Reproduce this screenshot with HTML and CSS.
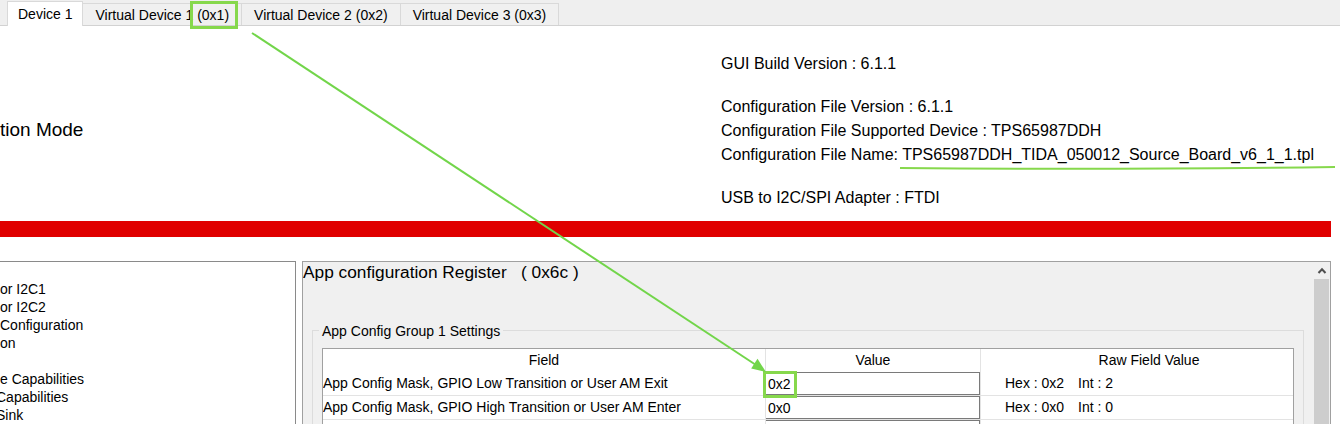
FILE: index.html
```html
<!DOCTYPE html>
<html>
<head>
<meta charset="utf-8">
<link rel="stylesheet" href="styles.css">
</head>
<body>
<div class="tabs">
  <div class="tab active">Device 1</div>
  <div class="tab">Virtual Device 1 (0x1)</div>
  <div class="tab">Virtual Device 2 (0x2)</div>
  <div class="tab">Virtual Device 3 (0x3)</div>
</div>
<div class="header">
  <div class="mode">tion Mode</div>
  <div class="info">
    <div class="line">GUI Build Version : 6.1.1</div>
    <div class="block">
      <div class="line">Configuration File Version : 6.1.1</div>
      <div class="line">Configuration File Supported Device : TPS65987DDH</div>
      <div class="line">Configuration File Name: TPS65987DDH_TIDA_050012_Source_Board_v6_1_1.tpl</div>
    </div>
    <div class="line">USB to I2C/SPI Adapter : FTDI</div>
  </div>
</div>
<div class="redbar"></div>
<div class="main">
  <div class="tree">
    <div class="item"></div>
    <div class="item">or I2C1</div>
    <div class="item">or I2C2</div>
    <div class="item">Configuration</div>
    <div class="item">on</div>
    <div class="item"></div>
    <div class="item">e Capabilities</div>
    <div class="item clip">Capabilities</div>
    <div class="item clip">Sink</div>
  </div>
  <div class="panel">
    <div class="panel-body">
      <div class="title">App configuration Register &nbsp;&nbsp;( 0x6c )</div>
      <div class="group">
        <div class="legend">App Config Group 1 Settings</div>
        <div class="table">
          <div class="row head">
            <div class="cell field center">Field</div>
            <div class="cell value center">Value</div>
            <div class="cell raw center">Raw Field Value</div>
          </div>
          <div class="row">
            <div class="cell field">App Config Mask, GPIO Low Transition or User AM Exit</div>
            <div class="cell value"><div class="input">0x2</div></div>
            <div class="cell raw"><span class="hex">Hex : 0x2</span><span>Int : 2</span></div>
          </div>
          <div class="row">
            <div class="cell field">App Config Mask, GPIO High Transition or User AM Enter</div>
            <div class="cell value"><div class="input">0x0</div></div>
            <div class="cell raw"><span class="hex">Hex : 0x0</span><span>Int : 0</span></div>
          </div>
          <div class="row">
            <div class="cell field">App Config Mask</div>
            <div class="cell value"><div class="input">0x0</div></div>
            <div class="cell raw"><span class="hex">Hex : 0x0</span><span>Int : 0</span></div>
          </div>
        </div>
      </div>
    </div>
    <div class="scrollbar">
      <div class="sb-up">
        <svg class="chev" width="10" height="7" viewBox="0 0 10 7"><path d="M1.5 6 L5 2.2 L8.5 6" fill="none" stroke="#505050" stroke-width="2"/></svg>
      </div>
      <div class="sb-thumb"></div>
    </div>
  </div>
</div>
<svg class="annot" width="1340" height="424" viewBox="0 0 1340 424">
  <rect x="191.5" y="2.5" width="45" height="25" fill="none" stroke="#86d84c" stroke-width="3"/>
  <rect x="764.5" y="372.5" width="31" height="24" fill="none" stroke="#86d84c" stroke-width="3"/>
  <line x1="252" y1="33" x2="756" y2="365" stroke="#72d54a" stroke-width="2"/>
  <polygon points="766,372 757.5,358.8 751.2,368.4" fill="#72d54a"/>
  <path d="M900 168 Q1100 170 1335 167" fill="none" stroke="#86d84c" stroke-width="2"/>
</svg>
</body>
</html>
```
FILE: styles.css
```css
html, body {
  margin: 0;
  padding: 0;
}
body {
  width: 1340px;
  height: 424px;
  overflow: hidden;
  position: relative;
  background: #ffffff;
  font-family: "Liberation Sans", Arial, sans-serif;
  color: #000;
}
.tabs {
  height: 26px;
  box-sizing: border-box;
  background: #efefef;
  border-bottom: 1px solid #d2d2d2;
  display: flex;
  align-items: flex-end;
  padding-left: 8px;
}
.tab {
  height: 22px;
  line-height: 22px;
  padding: 0 12px;
  border: 1px solid #d9d9d9;
  border-bottom: none;
  margin-left: -1px;
  font-size: 14px;
  background: #f0f0f0;
  box-sizing: border-box;
}
.tab.active {
  background: #ffffff;
  height: 25px;
  line-height: 24px;
  margin-bottom: -1px;
  padding: 0 10px;
}
.header {
  display: grid;
  grid-template-columns: 721px 1fr;
  height: 195px;
}
.mode {
  font-size: 19px;
  line-height: 24px;
  margin-top: 92px;
}
.info {
  font-size: 16px;
  padding-top: 26px;
}
.line {
  line-height: 24px;
  height: 24px;
}
.block {
  margin: 19px 0;
}
.redbar {
  width: 1331px;
  height: 16px;
  background: #e00000;
}
.main {
  display: flex;
  gap: 6px;
  margin-top: 24px;
  width: 1331px;
}
.tree {
  width: 296px;
  height: 170px;
  box-sizing: border-box;
  border: 1px solid #8a8a8a;
  border-left: none;
  background: #fff;
  font-size: 14px;
  overflow: hidden;
  flex-shrink: 0;
}
.item {
  height: 18px;
  line-height: 19px;
  white-space: nowrap;
}
.item.clip {
  margin-left: -4px;
}
.panel {
  flex: 1;
  height: 170px;
  box-sizing: border-box;
  border: 1px solid #a0a0a0;
  background: #f0f0f0;
  display: flex;
}
.panel-body {
  flex: 1;
  overflow: hidden;
}
.title {
  font-size: 17.3px;
  line-height: 20px;
  white-space: nowrap;
}
.group {
  margin: 48px 9px 0 9px;
  border: 1px solid #dcdcdc;
  padding: 0 9px;
}
.legend {
  width: max-content;
  margin-top: -9px;
  margin-left: -3px;
  padding: 0 3px;
  background: #f0f0f0;
  font-size: 14px;
  line-height: 18px;
}
.table {
  margin-top: 8px;
  background: #fff;
  border: 1px solid #a0a0a0;
  font-size: 14px;
}
.row {
  display: grid;
  grid-template-columns: 442px 215px 1fr;
  height: 24px;
  box-sizing: border-box;
  border-bottom: 1px solid #e3e3e3;
}
.row.head {
  height: 23px;
  border-bottom: none;
}
.cell {
  line-height: 23px;
  white-space: nowrap;
  overflow: hidden;
}
.cell.center {
  text-align: center;
}
.value, .raw {
  border-left: 1px solid #e3e3e3;
}
.input {
  height: 23px;
  box-sizing: border-box;
  border: 1px solid #7a7a7a;
  margin-left: -1px;
  line-height: 22px;
  padding-left: 2px;
  background: #fff;
}
.raw {
  padding-left: 24px;
}
.hex {
  display: inline-block;
  width: 73px;
}
.scrollbar {
  width: 17px;
  flex-shrink: 0;
  display: flex;
  flex-direction: column;
  background: #f0f0f0;
}
.sb-up {
  height: 17px;
  flex-shrink: 0;
  display: flex;
  align-items: center;
  justify-content: center;
}
.chev {
  display: block;
}
.sb-thumb {
  flex: 1;
  margin: 0 1px;
  background: #cdcdcd;
}
.annot {
  position: absolute;
  left: 0;
  top: 0;
  pointer-events: none;
}
```
